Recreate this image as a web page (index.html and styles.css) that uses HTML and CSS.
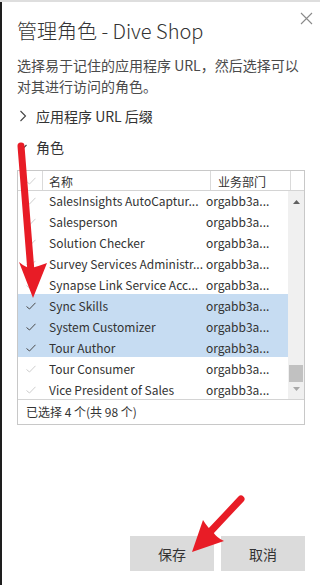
FILE: index.html
```html
<!DOCTYPE html>
<html lang="zh-CN">
<head>
<meta charset="utf-8">
<link rel="stylesheet" href="styles.css">
</head>
<body>
<div class="frame">
  <div class="dialog">
    <div class="head">
      <h1 class="title">管理角色 - Dive Shop</h1>
      <svg class="close" width="13" height="13" viewBox="0 0 13 13"><path d="M1 1L12 12M12 1L1 12" stroke="#8a8a8a" stroke-width="1.1" fill="none"/></svg>
    </div>
    <p class="desc">选择易于记住的应用程序 URL，然后选择可以对其进行访问的角色。</p>
    <div class="section">
      <svg class="chev" width="8" height="12" viewBox="0 0 8 12"><path d="M1.5 1L6.5 6L1.5 11" stroke="#444" stroke-width="1.1" fill="none"/></svg>
      <span>应用程序 URL 后缀</span>
    </div>
    <div class="section">
      <svg class="chev" width="8" height="12" viewBox="0 0 8 12"><path d="M0.5 4L4 7.5L7.5 4" stroke="#444" stroke-width="1.1" fill="none"/></svg>
      <span>角色</span>
    </div>
    <div class="grid">
      <div class="ghead">
        <div class="c-check hcell"><svg width="10" height="8" viewBox="0 0 10 8"><path d="M0.5 4.5L3.5 7L9.5 0.8" stroke="#cfcfcf" stroke-width="1" fill="none"/></svg></div>
        <div class="c-name hcell">名称</div>
        <div class="c-dept hcell">业务部门</div>
        <div class="c-scroll hcell"></div>
      </div>
      <div class="gbody">
        <div class="rows">
          <div class="row"><div class="c-check"><svg class="ck" width="10" height="8" viewBox="0 0 10 8"><path d="M0.5 4.5L3.5 7L9.5 0.8"/></svg></div><div class="c-name">SalesInsights AutoCaptur...</div><div class="c-dept">orgabb3a...</div></div>
          <div class="row"><div class="c-check"><svg class="ck" width="10" height="8" viewBox="0 0 10 8"><path d="M0.5 4.5L3.5 7L9.5 0.8"/></svg></div><div class="c-name">Salesperson</div><div class="c-dept">orgabb3a...</div></div>
          <div class="row"><div class="c-check"><svg class="ck" width="10" height="8" viewBox="0 0 10 8"><path d="M0.5 4.5L3.5 7L9.5 0.8"/></svg></div><div class="c-name">Solution Checker</div><div class="c-dept">orgabb3a...</div></div>
          <div class="row"><div class="c-check"><svg class="ck" width="10" height="8" viewBox="0 0 10 8"><path d="M0.5 4.5L3.5 7L9.5 0.8"/></svg></div><div class="c-name">Survey Services Administr...</div><div class="c-dept">orgabb3a...</div></div>
          <div class="row"><div class="c-check"><svg class="ck" width="10" height="8" viewBox="0 0 10 8"><path d="M0.5 4.5L3.5 7L9.5 0.8"/></svg></div><div class="c-name">Synapse Link Service Acc...</div><div class="c-dept">orgabb3a...</div></div>
          <div class="row sel"><div class="c-check"><svg class="ck" width="10" height="8" viewBox="0 0 10 8"><path d="M0.5 4.5L3.5 7L9.5 0.8"/></svg></div><div class="c-name">Sync Skills</div><div class="c-dept">orgabb3a...</div></div>
          <div class="row sel"><div class="c-check"><svg class="ck" width="10" height="8" viewBox="0 0 10 8"><path d="M0.5 4.5L3.5 7L9.5 0.8"/></svg></div><div class="c-name">System Customizer</div><div class="c-dept">orgabb3a...</div></div>
          <div class="row sel"><div class="c-check"><svg class="ck" width="10" height="8" viewBox="0 0 10 8"><path d="M0.5 4.5L3.5 7L9.5 0.8"/></svg></div><div class="c-name">Tour Author</div><div class="c-dept">orgabb3a...</div></div>
          <div class="row"><div class="c-check"><svg class="ck" width="10" height="8" viewBox="0 0 10 8"><path d="M0.5 4.5L3.5 7L9.5 0.8"/></svg></div><div class="c-name">Tour Consumer</div><div class="c-dept">orgabb3a...</div></div>
          <div class="row"><div class="c-check"><svg class="ck" width="10" height="8" viewBox="0 0 10 8"><path d="M0.5 4.5L3.5 7L9.5 0.8"/></svg></div><div class="c-name">Vice President of Sales</div><div class="c-dept">orgabb3a...</div></div>
        </div>
        <div class="sbar">
          <svg class="arrow-up" width="7" height="4" viewBox="0 0 7 4"><path d="M0 4L3.5 0L7 4Z" fill="#606060"/></svg>
          <div class="track"><div class="thumb"></div></div>
          <svg class="arrow-dn" width="7" height="4" viewBox="0 0 7 4"><path d="M0 0L3.5 4L7 0Z" fill="#a8a8a8"/></svg>
        </div>
      </div>
      <div class="gfoot">已选择 4 个(共 98 个)</div>
    </div>
    <div class="actions">
      <button class="btn">保存</button>
      <button class="btn">取消</button>
    </div>
  </div>
  <svg class="annot" width="320" height="585" viewBox="0 0 320 585">
    <g fill="#e81c26" stroke="none">
      <line x1="21" y1="146" x2="31" y2="272" stroke="#e81c26" stroke-width="7" stroke-linecap="round"/>
      <path d="M19 262Q26 268 31.5 268Q39 266 47 263L33 298Z"/>
      <line x1="241" y1="499" x2="210" y2="532" stroke="#e81c26" stroke-width="7" stroke-linecap="round"/>
      <path d="M203 520Q208 528 213 532Q217 538 224 541L192 552Z"/>
    </g>
  </svg>
</div>
</body>
</html>
```

FILE: styles.css
```css
* { box-sizing: border-box; }
html, body {
  margin: 0;
  padding: 0;
  width: 320px;
  height: 585px;
  overflow: hidden;
  background: #fff;
}
body {
  font-family: "Segoe UI", "Noto Sans CJK SC", "Noto Sans", sans-serif;
  color: #333;
}
.frame {
  position: relative;
  width: 320px;
  height: 585px;
  border-top: 2px solid #dedede;
}
.dialog {
  height: 583px;
  border-left: 2px solid #1e1e1e;
  padding: 0 15px 0 15px;
  display: flex;
  flex-direction: column;
}
.head {
  display: flex;
  justify-content: space-between;
  align-items: flex-start;
}
.title {
  margin: 15px 0 0 0;
  font-size: 20px;
  line-height: 28px;
  font-weight: 300;
  color: #333;
}
.close {
  margin: 10px -8px 0 0;
}
.desc {
  margin: 10px 0 0 0;
  font-size: 14px;
  line-height: 21px;
  color: #4a4a4a;
}
.section {
  display: flex;
  align-items: center;
  height: 20px;
  font-size: 14px;
  color: #333;
  margin-top: 9px;
}
.section + .section { margin-top: 11px; }
.chev {
  margin: 0 9px 0 2px;
}
.grid {
  margin-top: 13px;
  width: 288px;
  border: 1px solid #c8c8c8;
  font-size: 12px;
}
.ghead {
  display: flex;
  height: 20px;
  border-bottom: 1px solid #d4d4d4;
}
.hcell {
  display: flex;
  align-items: center;
  border-right: 1px solid #dadada;
  line-height: 19px;
  padding-top: 1px;
}
.hcell:last-child { border-right: 0; }
.c-check {
  width: 25px;
  flex: none;
  display: flex;
  align-items: center;
  padding-left: 8px;
}
.c-name {
  width: 168px;
  flex: none;
  padding-left: 6px;
  white-space: nowrap;
  overflow: hidden;
}
.ghead .c-dept {
  width: 80px;
  flex: none;
  padding-left: 7px;
}
.ghead .c-scroll { flex: 1; }
.gbody {
  display: flex;
  height: 208px;
  overflow: hidden;
}
.rows {
  width: 270px;
  flex: none;
  margin-top: -2px;
}
.row {
  display: flex;
  align-items: stretch;
  height: 21px;
  line-height: 18px;
}
.row .c-name, .row .c-dept {
  padding-top: 3px;
}
.row .c-check { padding-top: 2px; }
.row .c-dept {
  padding-left: 0;
  margin-left: -5px;
  white-space: nowrap;
}
.row.sel { background: #c6dcf2; }
.ck path { stroke: #cdcdcd; stroke-width: 1; fill: none; }
.row.sel .ck path { stroke: #4a4a4a; }
.sbar {
  width: 16px;
  flex: none;
  background: #f0f0f0;
  display: flex;
  flex-direction: column;
  align-items: center;
}
.arrow-up { margin-top: 9px; flex: none; }
.track {
  flex: 1;
  width: 100%;
  display: flex;
  flex-direction: column;
  justify-content: flex-end;
  padding: 0 1px 0 1px;
}
.thumb {
  height: 17px;
  background: #c1c1c1;
  margin-bottom: 5px;
}
.arrow-dn { margin-bottom: 8px; flex: none; }
.gfoot {
  border-top: 1px solid #d4d4d4;
  height: 25px;
  line-height: 23px;
  padding-left: 8px;
  font-size: 12px;
  color: #333;
}
.actions {
  margin-top: auto;
  margin-bottom: 14px;
  display: flex;
  justify-content: flex-end;
  gap: 7px;
  padding-right: 0;
}
.btn {
  width: 84px;
  height: 35px;
  border: 0;
  background: #dbdbdb;
  font-family: "Segoe UI", "Noto Sans CJK SC", sans-serif;
  font-size: 14px;
  color: #333;
  padding: 0;
}
.annot {
  position: absolute;
  left: 0;
  top: -2px;
  pointer-events: none;
}
```
